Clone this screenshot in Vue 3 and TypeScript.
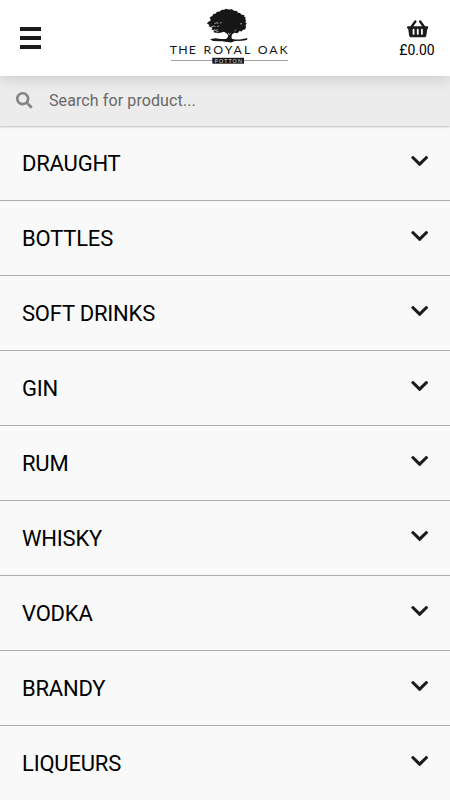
<script setup lang="ts">
const categories: string[] = [
  'DRAUGHT',
  'BOTTLES',
  'SOFT DRINKS',
  'GIN',
  'RUM',
  'WHISKY',
  'VODKA',
  'BRANDY',
  'LIQUEURS',
]
</script>

<template>
  <div class="page">
    <header class="header">
      <button class="menu" aria-label="Menu">
        <span></span>
        <span></span>
        <span></span>
      </button>
      <svg class="logo" viewBox="0 0 126 66" role="img" aria-label="The Royal Oak Potton">
        <path
          d="M54.5 6.5L57 4.8 59.5 4.8 60.5 3.7 64 4.6 67 4.2 69 5.7 72 6 72.8 7.7 75 8 76.6 9.8 79.4 10 79 11.5 80.5 12 80.2 14 81 15 80.4 17.2 81.8 18.5 80.6 20 81 22.5 80 24.5 77.6 25 77 26.6 74.5 26 72.5 28.2 69.4 27.7 67 29.5 66.4 32 67 33.8 70 34.5 75 34.4 80 33.4 82.5 33.3 82 35 77 35.8 70 36 66 37.4 57 36.2 48 36 45 34.2 50 33.3 56 34 61 33.9 62.8 32.3 63.2 30 61 27.9 59 26.7 56.5 27.5 52.5 28.2 48 27 50 25.8 46.5 24.4 47.5 22.7 43.6 21.3 44.6 20 42 18.8 43 17 45.5 15.8 45.5 14 44.6 12.4 47.5 10.8 48.3 9 51 8.4 51.6 6.9Z"
        />
        <path
          class="leaf-gap"
          d="M46 22l3-1.2 1.5 1M49.5 18.5l2-.7 2 .5M49 24.4l2 1.1 2-1M52 21.5l2-.7M55 18l1.5-.3M51 27l2.5-.4M75 19l2-.4M69.5 26l1.5-1.4M63.2 27.8l.9 2 1.6-1.6"
        />
        <g class="brand">
          <text x="4.8" y="49.3" textLength="26" lengthAdjust="spacing">THE</text>
          <text x="38.4" y="49.3" textLength="47" lengthAdjust="spacing">ROYAL</text>
          <text x="92.7" y="49.3" textLength="30" lengthAdjust="spacing">OAK</text>
        </g>
        <path class="rule" d="M6 55.5H123" />
        <rect x="47.3" y="52.8" width="31.7" height="5.9" />
        <text class="town" x="49.6" y="57.7" textLength="27.5" lengthAdjust="spacing">POTTON</text>
      </svg>
      <div class="basket">
        <svg viewBox="0 0 576 512" preserveAspectRatio="none" aria-hidden="true">
          <path
            d="M576 216v16c0 13.255-10.745 24-24 24h-8l-26.113 182.788C514.509 462.435 494.257 480 470.37 480H105.63c-23.887 0-44.139-17.565-47.518-41.212L32 256h-8c-13.255 0-24-10.745-24-24v-16c0-13.255 10.745-24 24-24h67.341l106.78-146.821c10.395-14.292 30.407-17.453 44.701-7.058 14.293 10.395 17.453 30.408 7.058 44.701L170.477 192h235.046L326.12 82.821c-10.395-14.292-7.234-34.306 7.059-44.701 14.291-10.395 34.306-7.235 44.701 7.058L484.659 192H552c13.255 0 24 10.745 24 24zM312 392V280c0-13.255-10.745-24-24-24s-24 10.745-24 24v112c0 13.255 10.745 24 24 24s24-10.745 24-24zm112 0V280c0-13.255-10.745-24-24-24s-24 10.745-24 24v112c0 13.255 10.745 24 24 24s24-10.745 24-24zm-224 0V280c0-13.255-10.745-24-24-24s-24 10.745-24 24v112c0 13.255 10.745 24 24 24s24-10.745 24-24z"
          />
        </svg>
        <span>£0.00</span>
      </div>
    </header>

    <div class="search">
      <svg viewBox="0 0 512 512" aria-hidden="true">
        <path
          d="M505 442.7L405.3 343c-4.5-4.5-10.6-7-17-7H372c27.6-35.3 44-79.7 44-128C416 93.1 322.9 0 208 0S0 93.1 0 208s93.1 208 208 208c48.3 0 92.7-16.4 128-44v16.3c0 6.4 2.5 12.5 7 17l99.7 99.7c9.4 9.4 24.6 9.4 33.9 0l28.3-28.3c9.4-9.4 9.4-24.6.1-34zM208 336c-70.7 0-128-57.2-128-128 0-70.7 57.2-128 128-128 70.7 0 128 57.2 128 128 0 70.7-57.2 128-128 128z"
        />
      </svg>
      <span>Search for product...</span>
    </div>

    <ul class="categories">
      <li v-for="name in categories" :key="name">
        <span>{{ name }}</span>
        <svg viewBox="0 0 448 512" aria-hidden="true">
          <path
            d="M207.029 381.476L12.686 187.132c-9.373-9.373-9.373-24.569 0-33.941l22.667-22.667c9.357-9.357 24.522-9.375 33.901-.04L224 284.505l154.745-154.021c9.379-9.335 24.544-9.317 33.901.04l22.667 22.667c9.373 9.373 9.373 24.569 0 33.941L240.971 381.476c-9.373 9.372-24.569 9.372-33.942 0z"
          />
        </svg>
      </li>
    </ul>
  </div>
</template>

<style>
body {
  margin: 0;
  overflow: hidden;
  background: #f9f9f9;
}
</style>

<style scoped>
.page {
  height: 800px;
  overflow: hidden;
  background: #f9f9f9;
  color: #000;
  font-family: Roboto, sans-serif;
}
.header {
  position: relative;
  z-index: 1;
  box-sizing: border-box;
  height: 76px;
  display: grid;
  grid-template-columns: 1fr 126px 1fr;
  align-items: start;
  background: #fff;
  box-shadow: 0 2px 14px rgba(0, 0, 0, 0.16);
}
.menu {
  display: flex;
  flex-direction: column;
  gap: 5px;
  width: 21.5px;
  margin: 27px 0 0 19.5px;
  padding: 0;
  border: 0;
  background: none;
}
.menu span {
  height: 4px;
  background: #1b1b1b;
}
.logo {
  width: 126px;
  height: 66px;
  margin: 5px 0 0 3px;
  fill: #171717;
}
.leaf-gap {
  fill: none;
  stroke: #ddd;
  stroke-width: 0.7;
}
.rule {
  fill: none;
  stroke: #888;
  stroke-width: 0.8;
}
.brand {
  font: 12.3px Lato, sans-serif;
}
.town {
  font: 5.4px Lato, sans-serif;
  fill: #ddd;
}
.basket {
  justify-self: end;
  display: flex;
  flex-direction: column;
  align-items: center;
  width: 40px;
  margin: 18.5px 13px 0 0;
  font-size: 14px;
  line-height: 18px;
}
.basket svg {
  width: 21.5px;
  height: 19.5px;
  margin: 0 0 2.8px 1px;
  fill: #1b1b1b;
}
.search {
  box-sizing: border-box;
  height: 50px;
  display: flex;
  align-items: center;
  gap: 16.5px;
  padding: 0 0 1px 16px;
  background: #ececec;
  color: #686868;
  font-size: 16px;
  letter-spacing: 0.1px;
  box-shadow: 0 1px 2px rgba(0, 0, 0, 0.24);
}
.search svg {
  width: 16.5px;
  height: 16.5px;
  fill: #858585;
}
.categories {
  margin: 0;
  padding: 0;
  list-style: none;
}
.categories li {
  box-sizing: border-box;
  height: 75px;
  display: flex;
  align-items: center;
  justify-content: space-between;
  padding: 1px 22px 0 22px;
  border-bottom: 1px solid #adadad;
  font-size: 22px;
  letter-spacing: -0.2px;
  line-height: 26px;
}
.categories svg {
  width: 17.3px;
  height: 20px;
  margin-bottom: 5px;
  fill: #1c1c1c;
}
</style>
